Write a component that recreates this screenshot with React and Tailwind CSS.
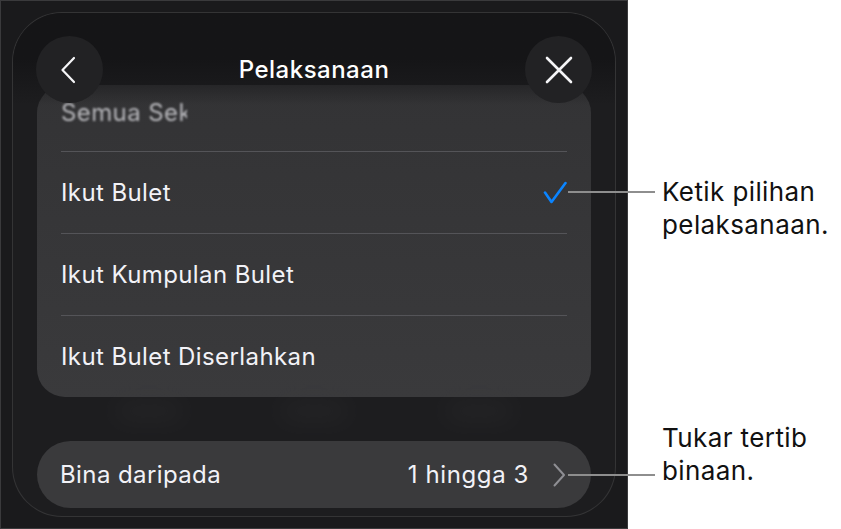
import React from "react";

const font = { fontFamily: "Inter, 'Noto Sans', 'Liberation Sans', sans-serif" };

function ChevronLeft() {
  return (
    <svg width="16" height="28" viewBox="0 0 16 28" fill="none">
      <path d="M14 2 L2.5 14 L14 26" stroke="#f5f5f7" strokeWidth="2.2" strokeLinecap="round" strokeLinejoin="round" />
    </svg>
  );
}

function CloseIcon() {
  return (
    <svg width="28" height="28" viewBox="0 0 28 28" fill="none">
      <path d="M2 2 L26 26 M26 2 L2 26" stroke="#f5f5f7" strokeWidth="2.6" strokeLinecap="round" />
    </svg>
  );
}

function Check() {
  return (
    <svg width="24" height="23" viewBox="0 0 24 23" fill="none">
      <path d="M2 11.5 L8.5 21 L22.5 2" stroke="#0a84ff" strokeWidth="2.6" strokeLinecap="round" strokeLinejoin="round" />
    </svg>
  );
}

function ChevronRight() {
  return (
    <svg width="13" height="24" viewBox="0 0 13 24" fill="none">
      <path d="M1.5 1.5 L11 12 L1.5 22.5" stroke="#8e8e93" strokeWidth="2" strokeLinecap="round" strokeLinejoin="round" />
    </svg>
  );
}

function Row({ label, checked }) {
  return (
    <div className="h-[81px] flex items-center justify-between px-[24px]">
      <span className="text-[24px] tracking-[0.4px] text-[#f2f2f7]">{label}</span>
      {checked && <Check />}
    </div>
  );
}

function Sep() {
  return <div className="h-px bg-[#545458] mx-[24px]" />;
}

export default function App() {
  return (
    <div className="relative flex w-[841px] h-[529px] bg-white" style={font}>
      {/* device panel */}
      <div className="w-[628px] h-full bg-[#1a1a1c] border border-[#3a3a3c] p-[11px]">
        <div className="relative h-full rounded-[50px] border border-white/10 bg-[#1d1d1f] overflow-hidden px-[24px] pt-[72px]">
          <div className="rounded-[28px] bg-gradient-to-b from-[#333335] to-[#3a3a3c] overflow-hidden">
            <div className="h-[66px] flex items-center px-[24px] pb-[10px]">
              <span className="inline-block w-[126px] overflow-hidden whitespace-nowrap text-[24px] tracking-[0.4px] text-[#b8b8bc] blur-[1px]">
                Semua Sekaligus
              </span>
            </div>
            <Sep />
            <Row label="Ikut Bulet" checked />
            <Sep />
            <Row label="Ikut Kumpulan Bulet" />
            <Sep />
            <Row label="Ikut Bulet Diserlahkan" />
          </div>

          <div className="h-[44px] flex items-start justify-around px-[30px] pt-[4px] opacity-25">
            <div className="w-[70px] h-[20px] rounded-full bg-[#3a3a3c] blur-md" />
            <div className="w-[70px] h-[20px] rounded-full bg-[#3a3a3c] blur-md" />
            <div className="w-[70px] h-[20px] rounded-full bg-[#3a3a3c] blur-md" />
          </div>

          <div className="h-[67px] rounded-full bg-[#3a3a3c] flex items-center justify-between pl-[23px] pr-[25px]">
            <span className="text-[24px] tracking-[0.4px] text-[#f2f2f7]">Bina daripada</span>
            <div className="flex items-center gap-[24px]">
              <span className="text-[24px] tracking-[0.6px] text-[#f2f2f7]">1 hingga 3</span>
              <ChevronRight />
            </div>
          </div>

          {/* header overlay */}
          <div className="absolute inset-x-0 top-0 h-[92px] bg-gradient-to-b from-[#151517] via-[#151517] to-transparent" />
          <div className="absolute inset-x-0 top-[23px] px-[23px] flex items-center justify-between">
            <div className="w-[67px] h-[67px] rounded-full bg-[#222224] flex items-center justify-center pr-[4px]">
              <ChevronLeft />
            </div>
            <span className="text-[24px] font-medium tracking-[0.5px] text-white">Pelaksanaan</span>
            <div className="w-[67px] h-[67px] rounded-full bg-[#222224] flex items-center justify-center">
              <CloseIcon />
            </div>
          </div>
        </div>
      </div>

      {/* annotations */}
      <div className="flex-1 pl-[34px] pt-[175px] text-[26px] leading-[33px] tracking-[0.4px] text-[#111]">
        <div>
          Ketik pilihan
          <br />
          pelaksanaan.
        </div>
        <div className="mt-[180px]">
          Tukar tertib
          <br />
          binaan.
        </div>
      </div>

      <div className="absolute left-[568px] top-[191px] w-[87px] h-[2px] bg-[#8e8e8e]" />
      <div className="absolute left-[568px] top-[474px] w-[87px] h-[2px] bg-[#8e8e8e]" />
    </div>
  );
}
